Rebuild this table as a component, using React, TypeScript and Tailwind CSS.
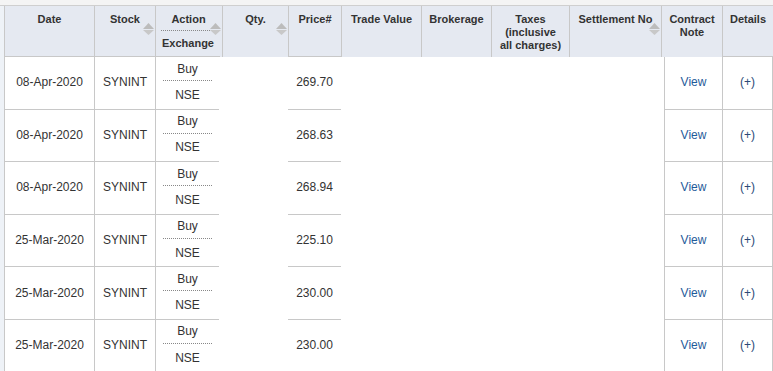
import React from "react";

const rows = [
  { date: "08-Apr-2020", price: "269.70" },
  { date: "08-Apr-2020", price: "268.63" },
  { date: "08-Apr-2020", price: "268.94" },
  { date: "25-Mar-2020", price: "225.10" },
  { date: "25-Mar-2020", price: "230.00" },
  { date: "25-Mar-2020", price: "230.00" },
];

function Sort() {
  return (
    <svg className="absolute right-[1px] top-[17px]" width="11" height="12" viewBox="0 0 11 12">
      <polygon points="5.5,0 11,6 0,6" fill="#bcbcbc" />
      <polygon points="0,7 11,7 5.5,12" fill="#c8c8c8" />
    </svg>
  );
}

function H({ w, children, b = true, sort = false, extra = "" }: { w: string; children?: React.ReactNode; b?: boolean; sort?: boolean; extra?: string }) {
  return (
    <div className={`relative ${w} h-[51px] shrink-0 border-l border-[#c8c8c8] ${b ? "border-b" : ""} text-center pt-[7px] leading-[13px] ${extra}`}>
      {children}
      {sort && <Sort />}
    </div>
  );
}

export default function App() {
  return (
    <div className="w-[773px] h-[371px] overflow-hidden bg-white text-[12px] text-[#333]" style={{ fontFamily: '"Liberation Sans", Arial, sans-serif' }}>
      <div className="h-[6px] bg-[#f4f4f4] border-b border-[#cfcfcf]" />
      <div className="flex">
        <div className="w-[4px] shrink-0 bg-[#eef2f7]" />
        <div className="flex-1">
          {/* header */}
          <div className="flex bg-[#e5e9f1] font-bold text-[11px]">
            <H w="w-[90px]">Date</H>
            <H w="w-[61px]" sort>Stock</H>
            <div className="relative w-[67px] h-[51px] shrink-0 border-l border-[#c8c8c8] text-center pt-[7px] leading-[13px]">
              <div className="border-b border-dotted border-[#888] ml-[5px] mr-[6px] pb-[4px]">Action</div>
              <div className="pt-[6px] h-[26px] border-b border-[#c8c8c8] w-[64px]">Exchange</div>
              <Sort />
            </div>
            <H w="w-[66px]" b={false} sort>Qty.</H>
            <H w="w-[53px]">Price#</H>
            <H w="w-[80px]" b={false}>Trade Value</H>
            <H w="w-[70px]" b={false}>Brokerage</H>
            <H w="w-[78px]" b={false}>Taxes<br />(inclusive<br />all charges)</H>
            <H w="w-[92px]" b={false} sort>Settlement No</H>
            <H w="w-[61px]" b={false}>
              Contract<br />Note
            </H>
            <H w="w-[51px]">Details</H>
          </div>
          {/* body */}
          {rows.map((r, i) => (
            <div key={i} className="flex h-[52.6px]">
              <div className="w-[90px] shrink-0 border-l border-b border-[#c8c8c8] flex items-center justify-center pb-[1px]">{r.date}</div>
              <div className="w-[61px] shrink-0 border-l border-b border-[#c8c8c8] flex items-center justify-center pb-[1px]">SYNINT</div>
              <div className="w-[64px] shrink-0 border-l border-b border-[#c8c8c8] flex flex-col">
                <div className="h-[24px] mx-[7px] border-b border-dotted border-[#888] flex items-center justify-center">Buy</div>
                <div className="flex-1 flex items-center justify-center">NSE</div>
              </div>
              <div className="w-[69px] shrink-0" />
              <div className="w-[53px] shrink-0 border-b border-[#c8c8c8] flex items-center justify-center pb-[1px]">{r.price}</div>
              <div className="w-[323px] shrink-0" />
              <div className="w-[58px] shrink-0 border-l border-b border-[#c8c8c8] flex items-center justify-center pb-[1px] text-[#1f5b9a]">View</div>
              <div className="w-[51px] shrink-0 border-l border-r border-b border-[#c8c8c8] flex items-center justify-center pb-[1px] text-[#2b4a78]">(+)</div>
            </div>
          ))}
        </div>
      </div>
    </div>
  );
}
